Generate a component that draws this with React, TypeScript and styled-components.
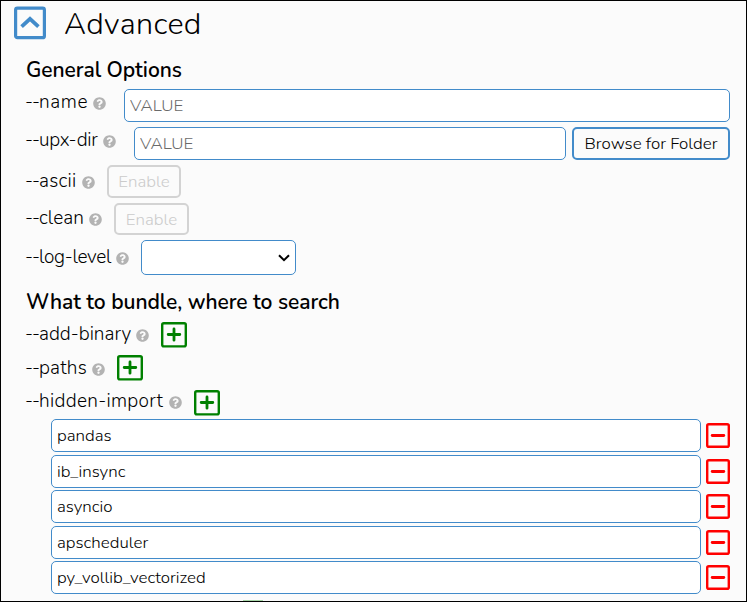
import React from "react";
import styled, { createGlobalStyle } from "styled-components";

const BLUE = "#428bca";

const GlobalStyle = createGlobalStyle`
  * { box-sizing: border-box; }
  body { margin: 0; background: #fbfbfb; }
  button, input, select { font: inherit; }
`;

const Panel = styled.main`
  width: 747px;
  height: 602px;
  overflow: hidden;
  border: 1px solid #000;
  background: #fbfbfb;
  color: #000;
  font-family: Nunito, Lato, sans-serif;
  font-weight: 350;
  padding: 4px 16px 0 12px;
`;

const Header = styled.header`
  display: flex;
  align-items: center;
  height: 36px;
  gap: 18px;
`;

const Toggle = styled.button`
  display: block;
  width: 34px;
  height: 34px;
  padding: 0;
  border: 0;
  background: transparent;
  svg { display: block; }
`;

const Title = styled.h1`
  margin: 2px 0 0 -1px;
  font-size: 30.5px;
  font-weight: 350;
  line-height: 36px;
  letter-spacing: 0.35px;
`;

const Section = styled.section<{ $top: number }>`
  margin: ${(p) => p.$top}px 0 0 12px;
`;

const Heading = styled.h2<{ $height: number }>`
  margin: 0;
  height: ${(p) => p.$height}px;
  padding-left: 1px;
  font-size: 21px;
  font-weight: 600;
  line-height: 29px;
  white-space: nowrap;
  letter-spacing: -0.05px;
`;

const Row = styled.div<{ $height: number; $gap?: number }>`
  display: flex;
  align-items: flex-start;
  height: ${(p) => p.$height}px;
  column-gap: ${(p) => p.$gap ?? 12}px;
`;

const LabelGroup = styled.div<{ $top: number }>`
  display: flex;
  align-items: flex-start;
  flex: none;
  padding-top: ${(p) => p.$top}px;
  svg { display: block; margin-top: 7px; }
`;

const Name = styled.label<{ $width: number; $track: number }>`
  flex: none;
  width: ${(p) => p.$width + 1}px;
  font-size: 19px;
  line-height: 24px;
  white-space: nowrap;
  letter-spacing: ${(p) => p.$track}px;
`;

const Dashes = styled.span`
  letter-spacing: -1px;
`;

const TextField = styled.input`
  flex: 1;
  min-width: 0;
  height: 33px;
  padding: 0 5px;
  border: 1px solid ${BLUE};
  border-radius: 5px;
  background: #fff;
  color: #000;
  outline: 0;
  font-size: 16.9px;
  &::placeholder { color: #6a6a6a; opacity: 1; }
`;

const Browse = styled.button`
  flex: none;
  width: 158px;
  height: 33px;
  margin-left: -12px;
  padding: 0;
  border: 2px solid ${BLUE};
  border-radius: 5px;
  background: #fbfbfb;
  color: #000;
  font-size: 16.9px;
  white-space: nowrap;
`;

const Enable = styled.button<{ $width: number; $height: number }>`
  width: ${(p) => p.$width}px;
  height: ${(p) => p.$height}px;
  padding: 0;
  border: 2px solid #d3d3d3;
  border-radius: 5px;
  background: transparent;
  color: #cbcbcb;
  font-size: 16.9px;
`;

const SelectBox = styled.div`
  display: flex;
  align-items: center;
  justify-content: flex-end;
  width: 155px;
  height: 35px;
  padding-right: 5px;
  border: 1px solid ${BLUE};
  border-radius: 5px;
  background: #fff;
`;

const IconButton = styled.button<{ $top?: number }>`
  flex: none;
  margin: ${(p) => p.$top ?? 0}px 0 0;
  padding: 0;
  border: 0;
  background: transparent;
  svg { display: block; }
`;

const Items = styled.div`
  display: flex;
  flex-direction: column;
  gap: 2.5px;
  margin-left: 26px;
`;

const Item = styled.div`
  display: flex;
  align-items: center;
  gap: 5px;
`;

const NextAdd = styled.div`
  width: 20px;
  height: 2px;
  margin: 6px 0 0 218px;
  background: #a9d6a9;
`;

const Help = () => (
  <svg width="13" height="13" viewBox="0 0 512 512" fill="#b3b3b3">
    <path d="M504 256c0 136.997-111.043 248-248 248S8 392.997 8 256C8 119.083 119.043 8 256 8s248 111.083 248 248zM262.655 90c-54.497 0-89.255 22.957-116.549 63.758-3.536 5.286-2.353 12.415 2.715 16.258l34.699 26.31c5.205 3.947 12.621 3.008 16.665-2.122 17.864-22.658 30.113-35.797 57.303-35.797 20.429 0 45.698 13.148 45.698 32.958 0 14.976-12.363 22.667-32.534 33.976C247.128 238.528 216 254.941 216 296v4c0 6.627 5.373 12 12 12h56c6.627 0 12-5.373 12-12v-1.333c0-28.462 83.186-29.647 83.186-106.667 0-58.002-60.165-102-116.531-102zM256 338c-25.365 0-46 20.635-46 46 0 25.364 20.635 46 46 46s46-20.636 46-46c0-25.365-20.635-46-46-46z" />
  </svg>
);

const Plus = () => (
  <svg width="26" height="26" viewBox="0 0 26 26" fill="none" stroke="#008000">
    <rect x="1.2" y="1.2" width="23.6" height="23.2" rx="1.6" strokeWidth="2.4" />
    <path d="M7.2 12.5H18.8M13 7V18.2" strokeWidth="2.8" strokeLinecap="round" />
  </svg>
);

const Minus = () => (
  <svg width="24" height="25" viewBox="0 0 24 25" fill="none" stroke="#f00">
    <rect x="1.2" y="1.2" width="21.6" height="22.6" rx="1.6" strokeWidth="2.4" />
    <path d="M6.2 12.5H17.8" strokeWidth="2.8" strokeLinecap="round" />
  </svg>
);

type LabelProps = { text: string; width: number; top: number; track: number };
const Label = ({ text, width, top, track }: LabelProps) => (
  <LabelGroup $top={top}>
    <Name $width={width} $track={track}>
      <Dashes>--</Dashes>{text}
    </Name>
    <Help />
  </LabelGroup>
);

const imports = ["pandas", "ib_insync", "asyncio", "apscheduler", "py_vollib_vectorized"];

export default function App() {
  return (
    <Panel>
      <GlobalStyle />
      <Header>
        <Toggle aria-label="Collapse">
          <svg width="34" height="34" viewBox="0 0 34 34" fill="none" stroke={BLUE}>
            <rect x="2.6" y="2.1" width="28.8" height="29.6" rx="1.8" strokeWidth="3.2" />
            <path d="M8.6 20.6L17 12.8L25.4 20.6" strokeWidth="3.8" />
          </svg>
        </Toggle>
        <Title>Advanced</Title>
      </Header>

      <Section $top={15}>
        <Heading $height={33}>General Options</Heading>
        <Row $height={38} $gap={18}>
          <Label text="name" width={67} top={1} track={0.6} />
          <TextField placeholder="VALUE" />
        </Row>
        <Row $height={38} $gap={18}>
          <Label text="upx-dir" width={77} top={1} track={-0.25} />
          <TextField placeholder="VALUE" />
          <Browse>Browse for Folder</Browse>
        </Row>
        <Row $height={38}>
          <Label text="ascii" width={56} top={4} track={0.25} />
          <Enable disabled $width={74} $height={33}>Enable</Enable>
        </Row>
        <Row $height={37}>
          <Label text="clean" width={63} top={3} track={0.1} />
          <Enable disabled $width={75} $height={32}>Enable</Enable>
        </Row>
        <Row $height={35}>
          <Label text="log-level" width={90} top={5} track={-0.3} />
          <SelectBox role="combobox" aria-label="log-level">
            <svg width="12" height="8" viewBox="0 0 12 8" fill="none" stroke="#000" strokeWidth="2">
              <path d="M1 1.2L6 6.2L11 1.2" />
            </svg>
          </SelectBox>
        </Row>
      </Section>

      <Section $top={13}>
        <Heading $height={28}>What to bundle, where to search</Heading>
        <Row $height={34}>
          <Label text="add-binary" width={110} top={6} track={0} />
          <IconButton $top={6} aria-label="Add binary"><Plus /></IconButton>
        </Row>
        <Row $height={33}>
          <Label text="paths" width={66} top={6} track={0.2} />
          <IconButton $top={5} aria-label="Add path"><Plus /></IconButton>
        </Row>
        <Row $height={36}>
          <Label text="hidden-import" width={143} top={6} track={0.3} />
          <IconButton $top={7} aria-label="Add hidden import"><Plus /></IconButton>
        </Row>
        <Items>
          {imports.map((value) => (
            <Item key={value}>
              <TextField readOnly value={value} />
              <IconButton aria-label="Remove"><Minus /></IconButton>
            </Item>
          ))}
        </Items>
        <NextAdd />
      </Section>
    </Panel>
  );
}
